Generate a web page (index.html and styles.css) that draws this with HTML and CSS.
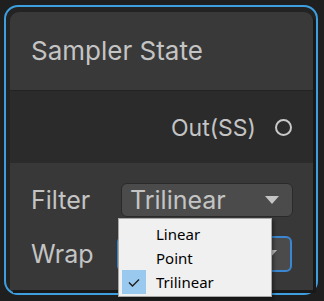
FILE: index.html
```html
<!DOCTYPE html>
<html>
<head>
<meta charset="utf-8">
<link rel="stylesheet" href="styles.css">
</head>
<body>
<div class="selection">
  <div class="node">
    <div class="header">Sampler State</div>
    <div class="ports">
      <span class="port-label">Out(SS)</span>
      <span class="port-dot"></span>
    </div>
    <div class="settings">
      <div class="row">
        <span class="label">Filter</span>
        <div class="select">
          <span class="value">Trilinear</span>
          <span class="arrow"></span>
        </div>
      </div>
      <div class="row">
        <span class="label">Wrap</span>
        <div class="select focused">
          <span class="value"></span>
          <span class="arrow"></span>
        </div>
      </div>
    </div>
  </div>
  <div class="popup">
    <div class="item"><span class="check"></span><span class="text">Linear</span></div>
    <div class="item"><span class="check"></span><span class="text">Point</span></div>
    <div class="item selected"><span class="check"><svg width="24" height="24" viewBox="0 0 24 24"><path d="M7 12.5 L10.5 16 L17 9.5" fill="none" stroke="#1e1e1e" stroke-width="1.4"/></svg></span><span class="text">Trilinear</span></div>
  </div>
</div>
</body>
</html>
```

FILE: styles.css
```css
html, body {
  margin: 0;
  padding: 0;
  background: #1f1f1f;
  width: 324px;
  height: 301px;
  overflow: hidden;
  font-family: Inter, "Noto Sans", sans-serif;
}

.selection {
  position: relative;
  margin: 5px 0 0 4px;
  border: 2px solid #3d9fe0;
  border-radius: 14px;
  background: #232323;
  padding: 5px 0 0 4px;
  box-sizing: content-box;
  width: 306px;
  height: 281px;
}

.node {
  width: 303px;
  height: 278px;
  border-radius: 9px 9px 0 0;
  overflow: hidden;
  display: flex;
  flex-direction: column;
  box-shadow: 3px 3px 0 #191919;
}

.header {
  height: 78px;
  background: #393939;
  border-bottom: 1px solid #232323;
  color: #c4c4c4;
  font-size: 26px;
  line-height: 78px;
  padding-left: 21px;
  flex: none;
}

.ports {
  height: 72px;
  background: #2b2b2b;
  display: flex;
  align-items: center;
  justify-content: flex-end;
  padding-right: 21px;
  gap: 19px;
  flex: none;
}

.port-label {
  color: #c4c4c4;
  font-size: 23px;
  margin-top: 2px;
}

.port-dot {
  width: 13px;
  height: 13px;
  border: 2px solid #c8c8c8;
  border-radius: 50%;
  background: #2b2b2b;
}

.settings {
  flex: 1;
  background: #383838;
  padding-top: 20px;
  display: flex;
  flex-direction: column;
  gap: 20px;
}

.row {
  display: flex;
  align-items: center;
  height: 34px;
}

.label {
  width: 90px;
  padding-left: 21px;
  color: #c4c4c4;
  font-size: 25px;
}

.select {
  border: 1px solid #2a2a2a;
  border-radius: 6px;
  background: #4b4b4b;
  display: flex;
  align-items: center;
  justify-content: space-between;
  padding: 0 13px 0 8px;
  box-sizing: border-box;
  width: 172px;
  height: 34px;
}

.select.focused {
  border: 2px solid #3a86d0;
  margin-left: -4px;
  width: 175px;
  height: 36px;
}

.value {
  color: #c4c4c4;
  font-size: 25px;
}

.arrow {
  width: 0;
  height: 0;
  border-left: 7px solid transparent;
  border-right: 7px solid transparent;
  border-top: 8px solid #c4c4c4;
}

.popup {
  position: absolute;
  left: 112px;
  top: 211px;
  background: #f0f0f0;
  border: 1px solid #a8a8a8;
  box-shadow: 2px 2px 3px rgba(0,0,0,0.35);
  padding: 3px 0 0 3px;
  box-sizing: border-box;
  width: 154px;
  height: 79px;
  font-family: "Noto Sans", "Open Sans", sans-serif;
}

.item {
  display: flex;
  align-items: center;
  height: 24px;
}

.check {
  width: 24px;
  height: 24px;
  flex: none;
}

.item.selected .check {
  background: #99c9ef;
}

.check svg {
  display: block;
}

.text {
  margin-left: 10px;
  font-size: 15px;
  color: #000;
}
```
